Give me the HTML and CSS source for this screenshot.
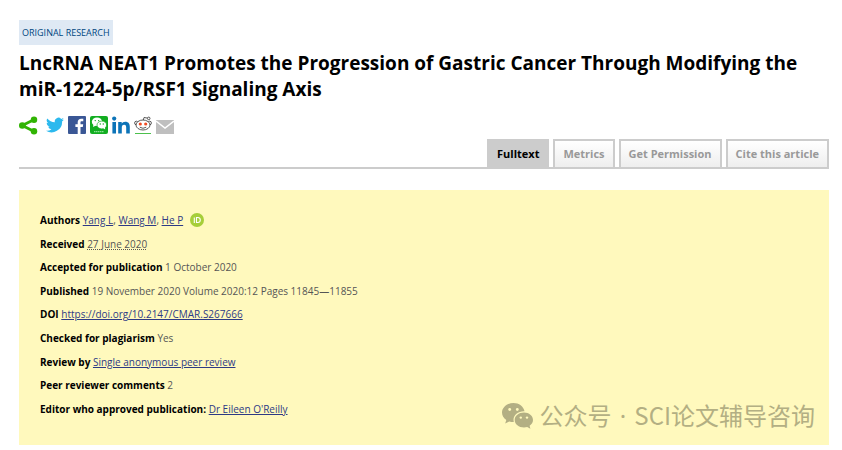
FILE: index.html
```
<!DOCTYPE html>
<html lang="en">
<head>
<meta charset="utf-8">
<meta name="viewport" content="width=device-width, initial-scale=1">
<title>LncRNA NEAT1 Promotes the Progression of Gastric Cancer</title>
<link rel="stylesheet" href="styles.css">
</head>
<body>
<main class="article">
  <span class="category">ORIGINAL RESEARCH</span>
  <h1 class="title">LncRNA NEAT1 Promotes the Progression of Gastric Cancer Through Modifying the <span class="term">miR-1224-5p/RSF1</span> Signaling Axis</h1>

  <div class="share">
    <svg class="share-mark" viewBox="0 0 20 20" aria-hidden="true"><path d="M15.500 4 3.500 10l12 6" fill="none" stroke="#31b404" stroke-width="3"/><circle cx="3.500" cy="10" r="3.500" fill="#31b404"/><circle cx="15.800" cy="4" r="3.400" fill="#31b404"/><circle cx="15.800" cy="16" r="3.400" fill="#31b404"/></svg>
    <a href="#twitter" aria-label="Twitter"><svg viewBox="0 0 24 24"><path fill="#2cb9ee" d="M24 4.600a10 10 0 0 1-2.800.8 5 5 0 0 0 2.100-2.700 10 10 0 0 1-3.100 1.200 4.900 4.900 0 0 0-8.400 4.500A14 14 0 0 1 1.700 3.200a4.900 4.900 0 0 0 1.500 6.500 5 5 0 0 1-2.200-.6 4.900 4.900 0 0 0 3.900 4.900 5 5 0 0 1-2.200.1 4.900 4.900 0 0 0 4.600 3.400A9.900 9.900 0 0 1 0 19.500a14 14 0 0 0 21.500-12.400A10 10 0 0 0 24 4.600z"/></svg></a>
    <a href="#facebook" aria-label="Facebook"><svg viewBox="0 0 18 18"><path fill="#3a5795" d="M1 0h16a1 1 0 0 1 1 1v16a1 1 0 0 1-1 1H1a1 1 0 0 1-1-1V1a1 1 0 0 1 1-1z"/><path fill="#fff" d="M9.700 18v-7H7.400V8.300h2.300V6.300c0-2.300 1.400-3.600 3.500-3.600l2.100.1v2.400h-1.500c-1.100 0-1.300.5-1.300 1.400v1.700h2.700l-.4 2.700h-2.300v7z"/></svg></a>
    <a href="#wechat" aria-label="WeChat"><svg viewBox="0 0 18 18"><rect width="18" height="18" rx="2" fill="#12ad21"/><ellipse cx="7" cy="5.800" rx="5.200" ry="4.300" fill="#fff"/><path fill="#fff" d="m3.500 8-.5 3 3-1.500z"/><ellipse cx="11.800" cy="9" rx="4.800" ry="3.900" fill="#fff" stroke="#12ad21" stroke-width=".7"/><path fill="#fff" d="m13 12 2.200 1.600-.3-3z"/><path stroke="#12ad21" stroke-width="1.300" stroke-linecap="round" d="M5.200 4.600h.1m3.300 0h.1M10.200 8h.1m2.900 0h.1"/><path stroke="#8be094" stroke-width="1.300" stroke-dasharray="1.500 .5" d="M4 15.600h10"/></svg></a>
    <a href="#linkedin" aria-label="LinkedIn"><svg viewBox="0 0 18 18"><g fill="#0d74b8"><circle cx="2.200" cy="2.600" r="2.100"/><path d="M.4 6H4v11.500H.4zM6.200 6h3.500v1.600c.6-1.100 1.800-1.900 3.500-1.900 3.500 0 4.600 2.100 4.600 5.400v6.400h-3.600v-5.800c0-1.700-.4-3-2.100-3s-2.300 1.200-2.300 3v5.800H6.200z"/></g></svg></a>
    <a href="#reddit" aria-label="Reddit"><svg viewBox="0 0 18 18"><g fill="#fff" stroke="#333" stroke-width=".8"><path d="m9 5 1-3.500 3.600.6" fill="none"/><circle cx="14.700" cy="2.400" r="1.300"/><circle cx="2.400" cy="7" r="1.800"/><circle cx="15.600" cy="7" r="1.800"/><ellipse cx="9" cy="9" rx="7" ry="5"/><path d="M5.800 11.200q3.200 2.200 6.400 0" fill="none"/></g><circle cx="6.300" cy="8" r="1.600" fill="#f04b23"/><circle cx="11.700" cy="8" r="1.600" fill="#f04b23"/><path stroke="#4cc04c" d="M1 17.500h16"/></svg></a>
    <a href="#email" aria-label="Email"><svg viewBox="0 0 18 18"><path fill="#bfbfbf" d="M0 4h18v14H0z"/><path fill="none" stroke="#fff" stroke-width="1.500" d="m0 5 9 7 9-7"/></svg></a>
  </div>

  <nav class="tabs" aria-label="Article sections">
    <a class="tab tab-active" href="#fulltext" aria-current="page">Fulltext</a>
    <a class="tab" href="#metrics">Metrics</a>
    <a class="tab" href="#permission">Get Permission</a>
    <a class="tab" href="#cite">Cite this article</a>
  </nav>

  <section class="details">
    <p><b>Authors</b> <a href="#yang">Yang L</a>, <a href="#wang">Wang M</a>, <a href="#he">He P</a> <a class="orcid" href="#orcid" aria-label="ORCID"><svg viewBox="0 0 14 14"><circle cx="7" cy="7" r="7" fill="#a6ce39"/><path fill="none" stroke="#fff" stroke-width="1.100" d="M4.300 4.500v5.500M6.500 4.500v5h1.300a2.500 2.500 0 0 0 0-5z"/></svg></a></p>
    <p><b>Received</b> <span class="date">27 June 2020</span></p>
    <p><b>Accepted for publication</b> 1 October 2020</p>
    <p><b>Published</b> 19 November 2020 Volume 2020:12 Pages 11845—11855</p>
    <p><b>DOI</b> <a href="#doi">https://doi.org/10.2147/CMAR.S267666</a></p>
    <p><b>Checked for plagiarism</b> Yes</p>
    <p><b>Review by</b> <a href="#review">Single anonymous peer review</a></p>
    <p><b>Peer reviewer comments</b> 2</p>
    <p><b>Editor who approved publication:</b> <a href="#editor">Dr Eileen O'Reilly</a></p>
    <div class="watermark" lang="zh-CN">
      <svg viewBox="0 0 32 26" aria-hidden="true"><g fill="#b3af83"><path d="M11.500 0C5 0 0 4.300 0 9.600c0 3 1.700 5.700 4.300 7.400L3.200 20.500l4-2.100c1.400.4 2.800.6 4.600.6-1.600-6 3.600-11 10.700-10.700C21.600 3.500 17 0 11.500 0z"/><path d="M22 9.500c-5.200 0-9.300 3.400-9.300 7.500s4.100 7.500 9.300 7.500c1.100 0 2.200-.2 3.200-.5l3.200 1.700-.8-2.900c2.100-1.400 3.400-3.500 3.400-5.800 0-4.100-4-7.500-9-7.500z"/></g><g fill="#fff9bd"><circle cx="7.700" cy="6.500" r="1.400"/><circle cx="15.300" cy="6.500" r="1.400"/><circle cx="18.800" cy="14.600" r="1.200"/><circle cx="25" cy="14.600" r="1.200"/></g></svg>
      <span>公众号<span class="dot"> · </span>SCI论文辅导咨询</span>
    </div>
  </section>
</main>
</body>
</html>
```
FILE: styles.css
```
body {
  margin: 0;
  background: #fff;
  color: #555;
  font: 11px/1.36 "Open Sans", sans-serif;
}

.article {
  padding: 20px 13px 5px 19px;
}

.category {
  display: block;
  width: fit-content;
  padding: 0 3px;
  background: #dfe9f4;
  color: #00467f;
  font-size: 9px;
  line-height: 25px;
}

.title {
  margin: 5px 0 13px;
  color: #000;
  font-size: 19px;
  font-weight: 700;
  line-height: 26px;
}

.term {
  white-space: nowrap;
}

.share {
  display: flex;
  gap: 4px;
  height: 20px;
  align-items: center;
}

.share svg {
  display: block;
  width: 18px;
  height: 18px;
}

.share .share-mark {
  width: 19px;
  height: 19px;
  margin-right: 4px;
}

.tabs {
  display: flex;
  justify-content: flex-end;
  gap: 4px;
  margin-top: 4px;
  border-bottom: 2px solid #ccc;
}

.tab {
  padding: 0 8px;
  border: 2px solid #ccc;
  border-bottom: 0;
  background: linear-gradient(#fff, #eee);
  color: #999;
  font-weight: 700;
  line-height: 26px;
  text-decoration: none;
}

.tab-active {
  background: #ccc;
  color: #000;
}

.details {
  position: relative;
  margin-top: 21px;
  padding: 24px 21px 19px;
  background: #fff9bd;
  font-size: 10px;
}

.details p {
  margin: 0 0 10px;
}

.details b {
  color: #000;
}

.details p a {
  color: #2d3a85;
}

.date {
  text-decoration: underline dotted;
}

.orcid {
  display: inline-block;
  height: 14px;
  margin: -2px 0 0 4px;
  vertical-align: middle;
}

.orcid svg {
  display: block;
  width: 14px;
  height: 14px;
}

.watermark {
  position: absolute;
  right: 14px;
  bottom: 12px;
  display: flex;
  gap: 5px;
  align-items: center;
  color: #b3af83;
  font: 24px/34px "Noto Sans CJK SC", sans-serif;
}

.watermark svg {
  width: 32px;
  height: 26px;
}

.dot {
  padding: 0 2px;
  font-family: "Noto Sans", sans-serif;
}
```
